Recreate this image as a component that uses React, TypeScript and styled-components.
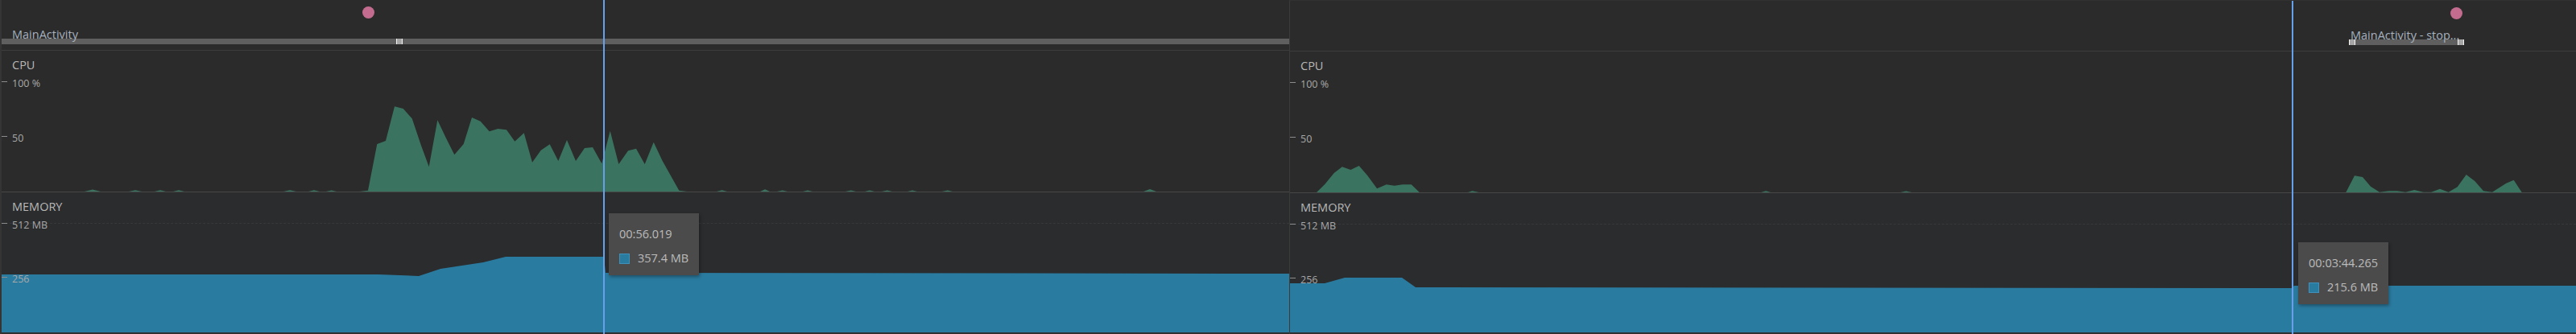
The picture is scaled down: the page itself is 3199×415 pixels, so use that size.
import React from "react";
import styled, { createGlobalStyle } from "styled-components";

const GlobalStyle = createGlobalStyle`
  html, body { margin: 0; padding: 0; background: #2b2b2b; }
  body { font-family: "Open Sans", "Noto Sans", Arial, sans-serif; overflow: hidden; }
  #root { width: 3199px; height: 415px; }
`;

const Z = 1000; // baseline marker

type Pt = [number, number];

type EventData = {
  x1: number;
  x2: number;
  label: string;
  labelOffset: number;
  handles: number[]; // offsets (abs x) of handle left edges
};

type PanelData = {
  key: string;
  width: number;
  first: boolean;
  ox: number;
  oy: number;
  events: EventData[];
  dots: number[];
  cpu: Pt[];
  mem: Pt[];
  cursorX: number;
  tooltip: { x: number; y: number; time: string; value: string };
};

const CPU_TOP = 63;
const CPU_H = 175;
const MEM_TOP = 239;

const leftPanel: PanelData = {
  key: "a",
  width: 1601,
  first: true,
  ox: 2,
  oy: 0,
  events: [{ x1: 2, x2: 1601, label: "MainActivity", labelOffset: 13, handles: [492] }],
  dots: [457.5],
  cpu: [
    [2, Z], [105, Z], [115, 235.5], [125, Z], [160, Z], [168, 236.3], [176, Z], [192, Z], [199, 236.3], [206, Z],
    [215, Z], [222, 236.3], [229, Z], [352, Z], [360, 236.3], [368, Z], [383, Z], [390, 236.3], [397, Z],
    [405, Z], [411.7, 236.5], [418, Z], [446.7, Z], [457, 236.7], [468.3, 179], [479, 175], [490, 132.3],
    [500.7, 135], [511.7, 147.3], [522.7, 180], [532.7, 207.3], [543.3, 149.3], [554, 171.7], [564.3, 192.3],
    [575.7, 179], [586, 146], [596.7, 150.7], [607.7, 163.3], [618.3, 160], [629, 161.3], [639.3, 175.7],
    [650.7, 165.3], [661, 201.7], [671.7, 186.7], [682.7, 179.3], [693.3, 200], [704, 174], [715, 200],
    [726, 184], [736, 183], [747.3, 203.3], [757.7, 162.7], [768.3, 204], [780, 187.3], [790, 184.7],
    [800.7, 204], [811.7, 176.7], [822.7, 200], [843.3, 236.7], [853, Z],
    [890, Z], [896.7, 236.3], [903, Z], [944, Z], [950, 235.3], [956, Z], [965, Z], [971.7, 236.5], [978, Z],
    [997, Z], [1003, 236.5], [1009, Z], [1050, Z], [1056.7, 236.5], [1063, Z], [1074, Z], [1080, 236.5],
    [1086, Z], [1095, Z], [1101.7, 236.5], [1108, Z], [1127, Z], [1133, 236.5], [1139, Z], [1170, Z],
    [1176.7, 236.5], [1183, Z], [1420, Z], [1428, 235], [1436, Z], [1601, Z],
  ],
  mem: [
    [2, 341], [470, 341], [520, 343], [547, 334], [600, 326], [628, 319], [750, 319], [752, 339],
    [1601, 340],
  ],
  cursorX: 749,
  tooltip: { x: 756, y: 265, time: "00:56.019", value: "357.4 MB" },
};

const rightPanel: PanelData = {
  key: "b",
  width: 1598,
  first: false,
  ox: 1602,
  oy: 1,
  events: [
    { x1: 2917, x2: 3060, label: "MainActivity - stop...", labelOffset: 2, handles: [2917, 3052] },
  ],
  dots: [3050.5],
  cpu: [
    [1602, Z], [1635, Z], [1645, 229.3], [1656.7, 215], [1666.7, 207.3], [1677.3, 211], [1687.7, 206],
    [1698.3, 218.3], [1710, 234.3], [1721.7, 229.3], [1731.7, 230.7], [1741.7, 229.3], [1752.7, 229.3],
    [1762.7, Z], [1823, Z], [1828.3, 237.3], [1836.7, Z], [2187, Z], [2193, 237.3], [2199, Z],
    [2360, Z], [2367, 237.5], [2374, Z], [2913.3, Z], [2924, 218.3], [2934, 220], [2944, 231.7],
    [2955, 238.7], [2966.7, 237.3], [2976.7, 237.3], [2987.3, 238.7], [2998.3, 236], [3009.3, 238.7],
    [3019.3, 238.7], [3030, 234.7], [3040.7, 238.7], [3051.7, 232.3], [3062.7, 217], [3073.3, 225],
    [3084, 237.3], [3095, 238.7], [3112.3, 227.7], [3121.7, 223.7], [3131.7, Z], [3199, Z],
  ],
  mem: [
    [1602, 352], [1645, 352], [1670, 345], [1741, 345], [1758, 357], [2846, 358], [2849, 355], [3199, 355],
  ],
  cursorX: 2846,
  tooltip: { x: 2854, y: 301, time: "00:03:44.265", value: "215.6 MB" },
};

const Screen = styled.main`
  display: flex;
  width: 3199px;
  height: 415px;
  background: #2b2b2b;
  overflow: hidden;
`;

const Panel = styled.section<{ $w: number; $first: boolean }>`
  position: relative;
  display: flex;
  flex-direction: column;
  flex: none;
  width: ${(p) => p.$w}px;
  height: 415px;
  box-sizing: border-box;
  border-left: ${(p) => (p.$first ? "2px solid #353535" : "1px solid #3b3b3b")};
  border-top: ${(p) => (p.$first ? "0" : "1px solid #313131")};
  overflow: hidden;
`;

const EventsTrack = styled.div`
  position: relative;
  flex: 0 0 62px;
  border-bottom: 1px solid #3d3d3d;
`;

const EventDot = styled.span<{ $x: number }>`
  position: absolute;
  top: 8px;
  left: ${(p) => p.$x}px;
  width: 15px;
  height: 15px;
  border-radius: 50%;
  background: #c46c8f;
`;

const EventBar = styled.div<{ $x: number; $w: number }>`
  position: absolute;
  top: 48px;
  left: ${(p) => p.$x}px;
  width: ${(p) => p.$w}px;
  height: 7px;
  background: #5f5f5f;
`;

const EventLabel = styled.span<{ $x: number }>`
  position: absolute;
  left: ${(p) => p.$x}px;
  top: -14px;
  font-size: 14.5px;
  line-height: 18px;
  white-space: nowrap;
  color: #a6b1be;
`;

const Handle = styled.span<{ $x: number }>`
  position: absolute;
  top: 0;
  left: ${(p) => p.$x}px;
  width: 8px;
  height: 7px;
  box-sizing: border-box;
  background: #a6a6a6;
  border-left: 1px solid #f4f4f4;
  border-right: 1px solid #f4f4f4;
`;

const ChartSection = styled.div<{ $fixed?: number; $tone: string; $rule: string }>`
  position: relative;
  flex: ${(p) => (p.$fixed ? `0 0 ${p.$fixed}px` : "1 1 auto")};
  background: ${(p) => p.$tone};
  border-bottom: ${(p) => p.$rule};
`;

const SectionTitle = styled.div`
  position: relative;
  z-index: 2;
  padding: 8px 0 0 13px;
  font-size: 14.5px;
  line-height: 20px;
  color: #b8b8b8;
`;

const ChartSvg = styled.svg`
  position: absolute;
  left: 0;
  top: 0;
  width: 100%;
  height: 100%;
  overflow: hidden;
`;

const GridRule = styled.div<{ $y: number }>`
  position: absolute;
  left: 0;
  right: 0;
  top: ${(p) => p.$y}px;
  border-top: 1px dashed #37383a;
`;

const AxisMark = styled.div<{ $y: number }>`
  position: absolute;
  left: 0;
  top: ${(p) => p.$y}px;
  z-index: 2;
  display: flex;
  align-items: flex-start;
`;

const TickLine = styled.span`
  flex: none;
  width: 7px;
  height: 1px;
  background: #8c8c8c;
`;

const AxisText = styled.span`
  margin-left: 6px;
  margin-top: -5px;
  font-size: 12.5px;
  line-height: 16px;
  color: #a9a9a9;
  white-space: nowrap;
`;

const CursorLine = styled.div<{ $x: number }>`
  position: absolute;
  top: 0;
  bottom: 0;
  left: ${(p) => p.$x}px;
  width: 2px;
  background: #66a0ea;
  z-index: 4;
`;

const Tooltip = styled.div<{ $x: number; $y: number }>`
  position: absolute;
  left: ${(p) => p.$x}px;
  top: ${(p) => p.$y}px;
  z-index: 5;
  display: flex;
  flex-direction: column;
  gap: 10px;
  padding: 16px 13px 11px;
  background: #4b4b4b;
  box-shadow: 1px 2px 4px rgba(0, 0, 0, 0.35);
  font-size: 14.5px;
  line-height: 20px;
  color: #bcbcbc;
  white-space: nowrap;
`;

const TooltipRow = styled.div`
  display: flex;
  align-items: center;
  gap: 10px;
`;

const Swatch = styled.span`
  flex: none;
  width: 13px;
  height: 13px;
  box-sizing: border-box;
  background: #2a7ba0;
  border: 1px solid #3f90bb;
`;

function areaPoints(pts: Pt[], ox: number, top: number, base: number): string {
  const local = pts.map(([x, y]) => [x - ox, y === Z ? base : Math.min(y - top, base)] as Pt);
  const first = local[0];
  const last = local[local.length - 1];
  const all: Pt[] = [[first[0], 500], ...local, [last[0], 500]];
  return all.map(([x, y]) => `${x.toFixed(1)},${y.toFixed(1)}`).join(" ");
}

function StudioPanel({ d }: { d: PanelData }) {
  const cpuTop = CPU_TOP + d.oy;
  const memTop = MEM_TOP + d.oy;
  return (
    <Panel $w={d.width} $first={d.first}>
      <EventsTrack>
        {d.dots.map((cx) => (
          <EventDot key={cx} $x={cx - 7.5 - d.ox} />
        ))}
        {d.events.map((e) => (
          <EventBar key={e.label} $x={e.x1 - d.ox} $w={e.x2 - e.x1}>
            {e.handles.map((h) => (
              <Handle key={h} $x={h - e.x1} />
            ))}
            <EventLabel $x={e.labelOffset}>{e.label}</EventLabel>
          </EventBar>
        ))}
      </EventsTrack>

      <ChartSection $fixed={CPU_H} $tone="#2b2b2b" $rule="1px solid #474747">
        <ChartSvg>
          <polygon points={areaPoints(d.cpu, d.ox, cpuTop, CPU_H)} fill="#3b7361" />
        </ChartSvg>
        <SectionTitle>CPU</SectionTitle>
        <AxisMark $y={38}>
          <TickLine />
          <AxisText>100 %</AxisText>
        </AxisMark>
        <AxisMark $y={106}>
          <TickLine />
          <AxisText>50</AxisText>
        </AxisMark>
      </ChartSection>

      <ChartSection $tone="#2b2c2e" $rule="2px solid #303030">
        <GridRule $y={38} />
        <ChartSvg>
          <polygon points={areaPoints(d.mem, d.ox, memTop, 400)} fill="#2a7ba0" />
        </ChartSvg>
        <SectionTitle>MEMORY</SectionTitle>
        <AxisMark $y={38}>
          <TickLine />
          <AxisText>512 MB</AxisText>
        </AxisMark>
        <AxisMark $y={105}>
          <TickLine />
          <AxisText>256</AxisText>
        </AxisMark>
        <Tooltip $x={d.tooltip.x - d.ox} $y={d.tooltip.y - memTop}>
          <div>{d.tooltip.time}</div>
          <TooltipRow>
            <Swatch />
            <span>{d.tooltip.value}</span>
          </TooltipRow>
        </Tooltip>
      </ChartSection>

      <CursorLine $x={d.cursorX - d.ox} />
    </Panel>
  );
}

export default function App() {
  return (
    <>
      <GlobalStyle />
      <Screen>
        <StudioPanel d={leftPanel} />
        <StudioPanel d={rightPanel} />
      </Screen>
    </>
  );
}
